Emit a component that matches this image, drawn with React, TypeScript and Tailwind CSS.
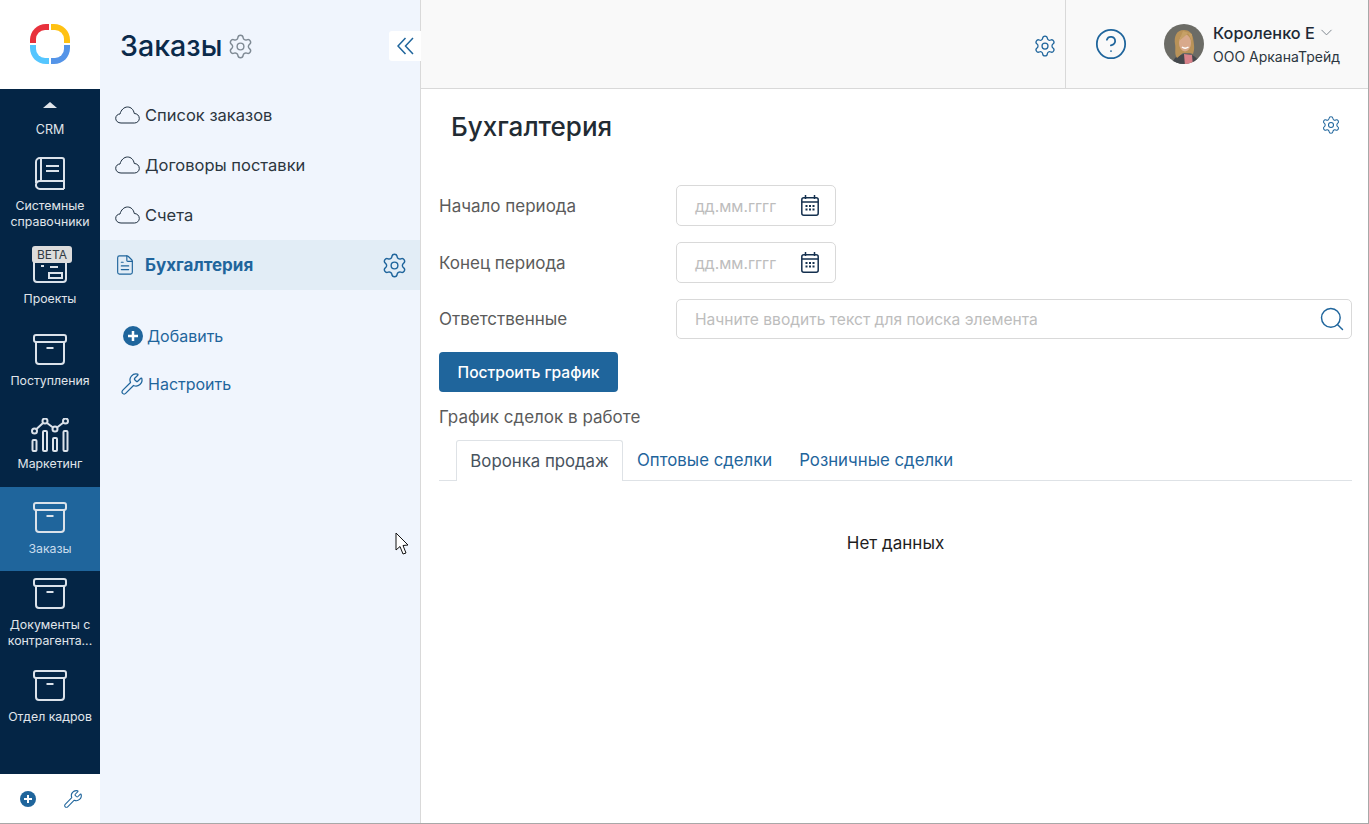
import type { ReactNode } from "react";
import { ChevronDown, CircleHelp, FileText, Search, Settings, Wrench } from "lucide-react";

function Logo() {
  return (
    <svg width="42" height="42" viewBox="0 0 42 42">
      <path d="M20 1 H17 C8 1 1 8 1 17 V20 H20 Z" fill="#e8313c" />
      <path d="M22 1 H25 C34 1 41 8 41 17 V20 H22 Z" fill="#ffc112" />
      <path d="M22 22 H41 V25 C41 34 34 41 25 41 H22 Z" fill="#5494e8" />
      <path d="M20 22 H1 V25 C1 34 8 41 17 41 H20 Z" fill="#55c6ff" />
      <rect x="7" y="7" width="28" height="28" rx="9" fill="#fff" />
    </svg>
  );
}

function BoxIcon() {
  return (
    <svg width="34" height="31" viewBox="0 0 34 31" fill="none" stroke="#dbe2ea" strokeWidth="2">
      <rect x="1" y="1" width="32" height="7" rx="2" />
      <path d="M3 8 V27 a3 3 0 0 0 3 3 H28 a3 3 0 0 0 3 -3 V8" />
      <path d="M13.500 14 H20.500" />
    </svg>
  );
}

function BookIcon() {
  return (
    <svg width="30" height="33" viewBox="0 0 30 33" fill="none" stroke="#dbe2ea" strokeWidth="2">
      <path d="M1 26 V5 a4 4 0 0 1 4 -4 H27 a2 2 0 0 1 2 2 V24 H5 a4 4 0 0 0 -4 3.500 a4 4 0 0 0 4 4.500 H29" />
      <path d="M6 1 V24 M11 9 H24 M11 14 H24" />
      <path d="M29 24 V32" />
    </svg>
  );
}

function ProjectIcon() {
  return (
    <svg width="34" height="35" viewBox="0 0 34 35" fill="none" stroke="#dbe2ea" strokeWidth="2">
      <rect x="1" y="1" width="32" height="33" rx="3" />
      <path d="M8 18 H11 M17 19 H25 M16 25 H29 V30 H16 Z" />
    </svg>
  );
}

function ChartIcon() {
  return (
    <svg width="38" height="34" viewBox="0 0 38 34" fill="none" stroke="#dbe2ea" strokeWidth="2" className="-mb-[4px]">
      <circle cx="3.500" cy="13" r="2.500" />
      <circle cx="14" cy="3" r="2.500" />
      <circle cx="24" cy="11" r="2.500" />
      <circle cx="34.500" cy="3" r="2.500" />
      <path d="M5.500 11 L12 5 M16 5 L22 9.500 M26 9.500 L32.500 4.500" />
      <rect x="1.500" y="22" width="4" height="11" rx="1" />
      <rect x="12" y="13" width="4" height="20" rx="1" />
      <rect x="22" y="20" width="4" height="13" rx="1" />
      <rect x="32.500" y="13" width="4" height="20" rx="1" />
    </svg>
  );
}

function CloudIcon() {
  return (
    <svg width="25" height="18" viewBox="0 0 25 18" fill="none" stroke="#1c2d3e" strokeWidth="1" className="shrink-0">
      <path d="M6 17 C3 17 0.700 15 0.700 12.300 C0.700 9.600 3 8 5 8 C6 4 9 1 12.500 1 C16 1 18.500 3.500 19.300 7.500 C22 7.500 24.300 9.500 24.300 12.500 C24.300 15 22 17 19.500 17 Z" />
    </svg>
  );
}

function RailItem({ icon, label, active, badge }: { icon: ReactNode; label: string; active?: boolean; badge?: boolean }) {
  return (
    <div className={`relative flex h-[84px] flex-col items-center justify-center gap-[8px] text-center text-[12.300px] leading-[16px] ${active ? "bg-[#1f659c] text-[#c9dcec]" : "text-[#e0e5eb]"}`}>
      {badge && (
        <span className="absolute left-[32px] top-[11px] rounded-[3px] bg-[#dcdcdc] px-[5px] text-[12px] leading-[17px] text-[#303a44]">BETA</span>
      )}
      {icon}
      <span className="whitespace-pre-line">{label}</span>
    </div>
  );
}

function Rail() {
  return (
    <aside className="flex w-[100px] shrink-0 flex-col bg-white">
      <div className="flex h-[89px] items-center justify-center pb-[2px]">
        <Logo />
      </div>
      <div className="flex-1 overflow-hidden bg-[#042545]">
        <div className="flex h-[62px] flex-col items-center pt-[13px] text-[12.500px] leading-[17px] text-[#e0e5eb]">
          <span className="h-0 w-0 border-x-[7px] border-b-[6px] border-x-transparent border-b-[#e0e5eb]" />
          <span className="mt-[13px]">CRM</span>
        </div>
        <RailItem icon={<BookIcon />} label={"Системные\nсправочники"} />
        <RailItem icon={<ProjectIcon />} label="Проекты" badge />
        <RailItem icon={<BoxIcon />} label="Поступления" />
        <RailItem icon={<ChartIcon />} label="Маркетинг" />
        <RailItem icon={<BoxIcon />} label="Заказы" active />
        <RailItem icon={<BoxIcon />} label={"Документы с\nконтрагента..."} />
        <RailItem icon={<BoxIcon />} label="Отдел кадров" />
      </div>
      <div className="flex h-[49px] items-center gap-[27px] pl-[20px]">
        <PlusDot size={16} />
        <Wrench size={20} strokeWidth={1.25} className="text-[#1f659c]" />
      </div>
    </aside>
  );
}

function PlusDot({ size }: { size: number }) {
  return (
    <svg width={size} height={size} viewBox="0 0 20 20">
      <circle cx="10" cy="10" r="10" fill="#1f659c" />
      <path d="M10 5 V15 M5 10 H15" stroke="#fff" strokeWidth="2.500" />
    </svg>
  );
}

function NavRow({ label }: { label: string }) {
  return (
    <div className="flex h-[50px] items-center pl-[15px] text-[#2c3640]">
      <CloudIcon />
      <span className="ml-[5px] text-[16.500px]">{label}</span>
    </div>
  );
}

function SubNav() {
  return (
    <nav className="relative flex w-[321px] shrink-0 flex-col border-r border-[#d9d9d9] bg-[#f0f5fd]">
      <div className="flex h-[90px] items-center pl-[20px] pt-[2px]">
        <h2 className="text-[28.600px] font-medium text-[#0b2a4a]">Заказы</h2>
        <Settings size={27} strokeWidth={1.25} className="ml-[5px] text-[#7f8a94]" />
      </div>
      <button type="button" className="absolute -right-px top-[31px] flex h-[30px] w-[32px] items-center justify-center rounded-l-[3px] bg-white text-[#1f659c]">
        <svg width="17" height="18" viewBox="0 0 17 18" fill="none" stroke="currentColor" strokeWidth="1.500">
          <path d="M8.500 1 L1 9 L8.500 17 M16 1 L8.500 9 L16 17" />
        </svg>
      </button>
      <div className="flex flex-col">
        <NavRow label="Список заказов" />
        <NavRow label="Договоры поставки" />
        <NavRow label="Счета" />
        <div className="flex h-[50px] items-center bg-[#e2edf6] pl-[14px] pr-[12px] text-[#1f659c]">
          <FileText size={22} strokeWidth={1.25} className="shrink-0" />
          <span className="ml-[9px] flex-1 pt-[2px] text-[17px] font-bold">Бухгалтерия</span>
          <Settings size={27} strokeWidth={1.25} />
        </div>
      </div>
      <div className="mt-[22px] flex flex-col text-[#1f659c]">
        <div className="flex h-[48px] items-center pl-[23px] text-[16px]">
          <PlusDot size={20} />
          <span className="ml-[4px]">Добавить</span>
        </div>
        <div className="flex h-[48px] items-center pl-[20px] text-[16px]">
          <Wrench size={24} strokeWidth={1.25} />
          <span className="ml-[4px]">Настроить</span>
        </div>
      </div>
    </nav>
  );
}

function Avatar() {
  return (
    <svg width="40" height="40" viewBox="0 0 40 40" className="rounded-full">
      <filter id="soft">
        <feGaussianBlur stdDeviation="0.600" />
      </filter>
      <rect width="40" height="40" fill="#6c6c66" />
      <g filter="url(#soft)">
        <path d="M8 42 C9 33 14 31 20 30 C30 30 34 33 35 42 Z" fill="#44484e" />
        <path d="M20 30 L28 31 L29 42 L21 42 Z" fill="#d9828a" />
        <path d="M20 6 C12 6 10 13 11 20 C12 25 10 30 13 34 L19 29 L26 29 L29 30 C31 25 30 20 29 14 C28 9 25 6 20 6 Z" fill="#b99258" />
        <ellipse cx="21" cy="19" rx="6" ry="8.500" fill="#d8a98c" />
        <path d="M15 17 C18 14 22 12 24 9 C26 12 27 14 27.500 18 L28 10 L19 7 Z" fill="#c6a066" />
        <path d="M18 23 Q21 25.500 24.500 23" stroke="#fff" strokeWidth="1.500" fill="none" />
      </g>
    </svg>
  );
}

function TopBar() {
  return (
    <header className="flex h-[89px] items-stretch justify-end border-b border-[#d9d9d9] bg-[#f9f9f9]">
      <div className="flex items-center pr-[8px] pt-[4px]">
        <Settings size={24} strokeWidth={1.25} className="text-[#1f659c]" />
      </div>
      <div className="flex w-[303px] items-center border-l border-[#d9d9d9]">
        <CircleHelp size={34} strokeWidth={1.25} className="ml-[28px] text-[#1f659c]" />
        <div className="ml-[36px]"><Avatar /></div>
        <div className="ml-[9px] flex flex-col gap-[4px] pt-[1px]">
          <div className="flex items-center text-[16.300px] font-medium leading-[20px] text-[#1d2a36]">
            Короленко Е
            <ChevronDown size={19} strokeWidth={1.25} className="ml-[2px] text-[#7f8890]" />
          </div>
          <div className="text-[14px] leading-[20px] text-[#2c3640]">ООО АрканаТрейд</div>
        </div>
      </div>
    </header>
  );
}

function CalendarIcon() {
  return (
    <svg width="18" height="21" viewBox="0 0 18 21" fill="none" stroke="#14304f" strokeWidth="1.500">
      <rect x="0.800" y="2.800" width="16.400" height="17.400" rx="2" />
      <path d="M4.500 0 V4 M13.500 0 V4 M1 7 H17" />
      <path d="M4.500 11 H6.500 M8 11 H10 M11.500 11 H13.500 M4.500 14.500 H6.500 M8 14.500 H10 M11.500 14.500 H13.500" strokeWidth="2" />
    </svg>
  );
}

function DateRow({ label }: { label: string }) {
  return (
    <div className="flex items-center">
      <span className="w-[237px] pt-[2px] text-[17px] text-[#5b5b5b]">{label}</span>
      <div className="flex h-[41px] w-[160px] items-center justify-between rounded-[5px] border border-[#d9d9d9] pl-[18px] pr-[16px] text-[15.700px] text-[#bdbdbd]">
        <span className="pt-[2px]">дд.мм.гггг</span>
        <CalendarIcon />
      </div>
    </div>
  );
}

function Main() {
  return (
    <main className="min-w-0 flex-1 bg-white">
      <TopBar />
      <div className="flex h-[76px] items-center justify-between pb-[2px] pl-[30px] pr-[27px]">
        <h1 className="text-[26px] font-medium text-[#222b33]">Бухгалтерия</h1>
        <Settings size={20} strokeWidth={1.25} className="mb-[2px] text-[#1f659c]" />
      </div>
      <div className="flex w-[931px] flex-col pl-[18px] pt-[20px]">
        <div className="flex flex-col gap-[16px]">
          <DateRow label="Начало периода" />
          <DateRow label="Конец периода" />
          <div className="flex items-center">
            <span className="w-[237px] pt-[2px] text-[17px] text-[#5b5b5b]">Ответственные</span>
            <div className="flex h-[40px] flex-1 items-center justify-between rounded-[5px] border border-[#d9d9d9] pl-[18px] pr-[5px] text-[15.600px] text-[#bdbdbd]">
              <span className="pt-[1px]">Начните вводить текст для поиска элемента</span>
              <Search size={28} strokeWidth={1.25} className="text-[#1f659c]" />
            </div>
          </div>
        </div>
        <button type="button" className="mt-[13px] h-[40px] w-[179px] rounded-[4px] bg-[#1f659c] pt-[1px] text-[15.600px] font-medium text-white">
          Построить график
        </button>
        <div className="mt-[14px] text-[17px] leading-[22px] text-[#5b5b5b]">График сделок в работе</div>
        <div className="mt-[12px] flex h-[41px] items-stretch border-b border-[#dee2e6] pl-[17px] text-[16.800px] text-[#1f659c]">
          <div className="-mb-px flex w-[167px] items-center justify-center rounded-t-[3px] border border-b-0 border-[#dee2e6] bg-white pt-[2px] text-[#48535e]">Воронка продаж</div>
          <div className="flex items-center pl-[14px] pt-[2px]">Оптовые сделки</div>
          <div className="flex items-center pl-[27px] pt-[2px]">Розничные сделки</div>
        </div>
        <div className="pt-[50px] text-center text-[17px] leading-[24px] text-[#1e1e1e]">Нет данных</div>
      </div>
    </main>
  );
}

export default function App() {
  return (
    <div className="relative flex h-[824px] w-[1369px] overflow-hidden border-b border-r border-[#a8a8a8] bg-white font-['Inter','Noto_Sans',sans-serif]">
      <Rail />
      <SubNav />
      <Main />
      {/* mouse pointer caught in the capture */}
      <svg className="absolute left-[395px] top-[532px]" width="16" height="24" viewBox="0 0 16 24">
        <path d="M1 1 V18 L5 14.500 L8 22 L11 21 L8 13.500 L13 13 Z" fill="#fff" stroke="#111" strokeWidth="1" />
      </svg>
    </div>
  );
}
